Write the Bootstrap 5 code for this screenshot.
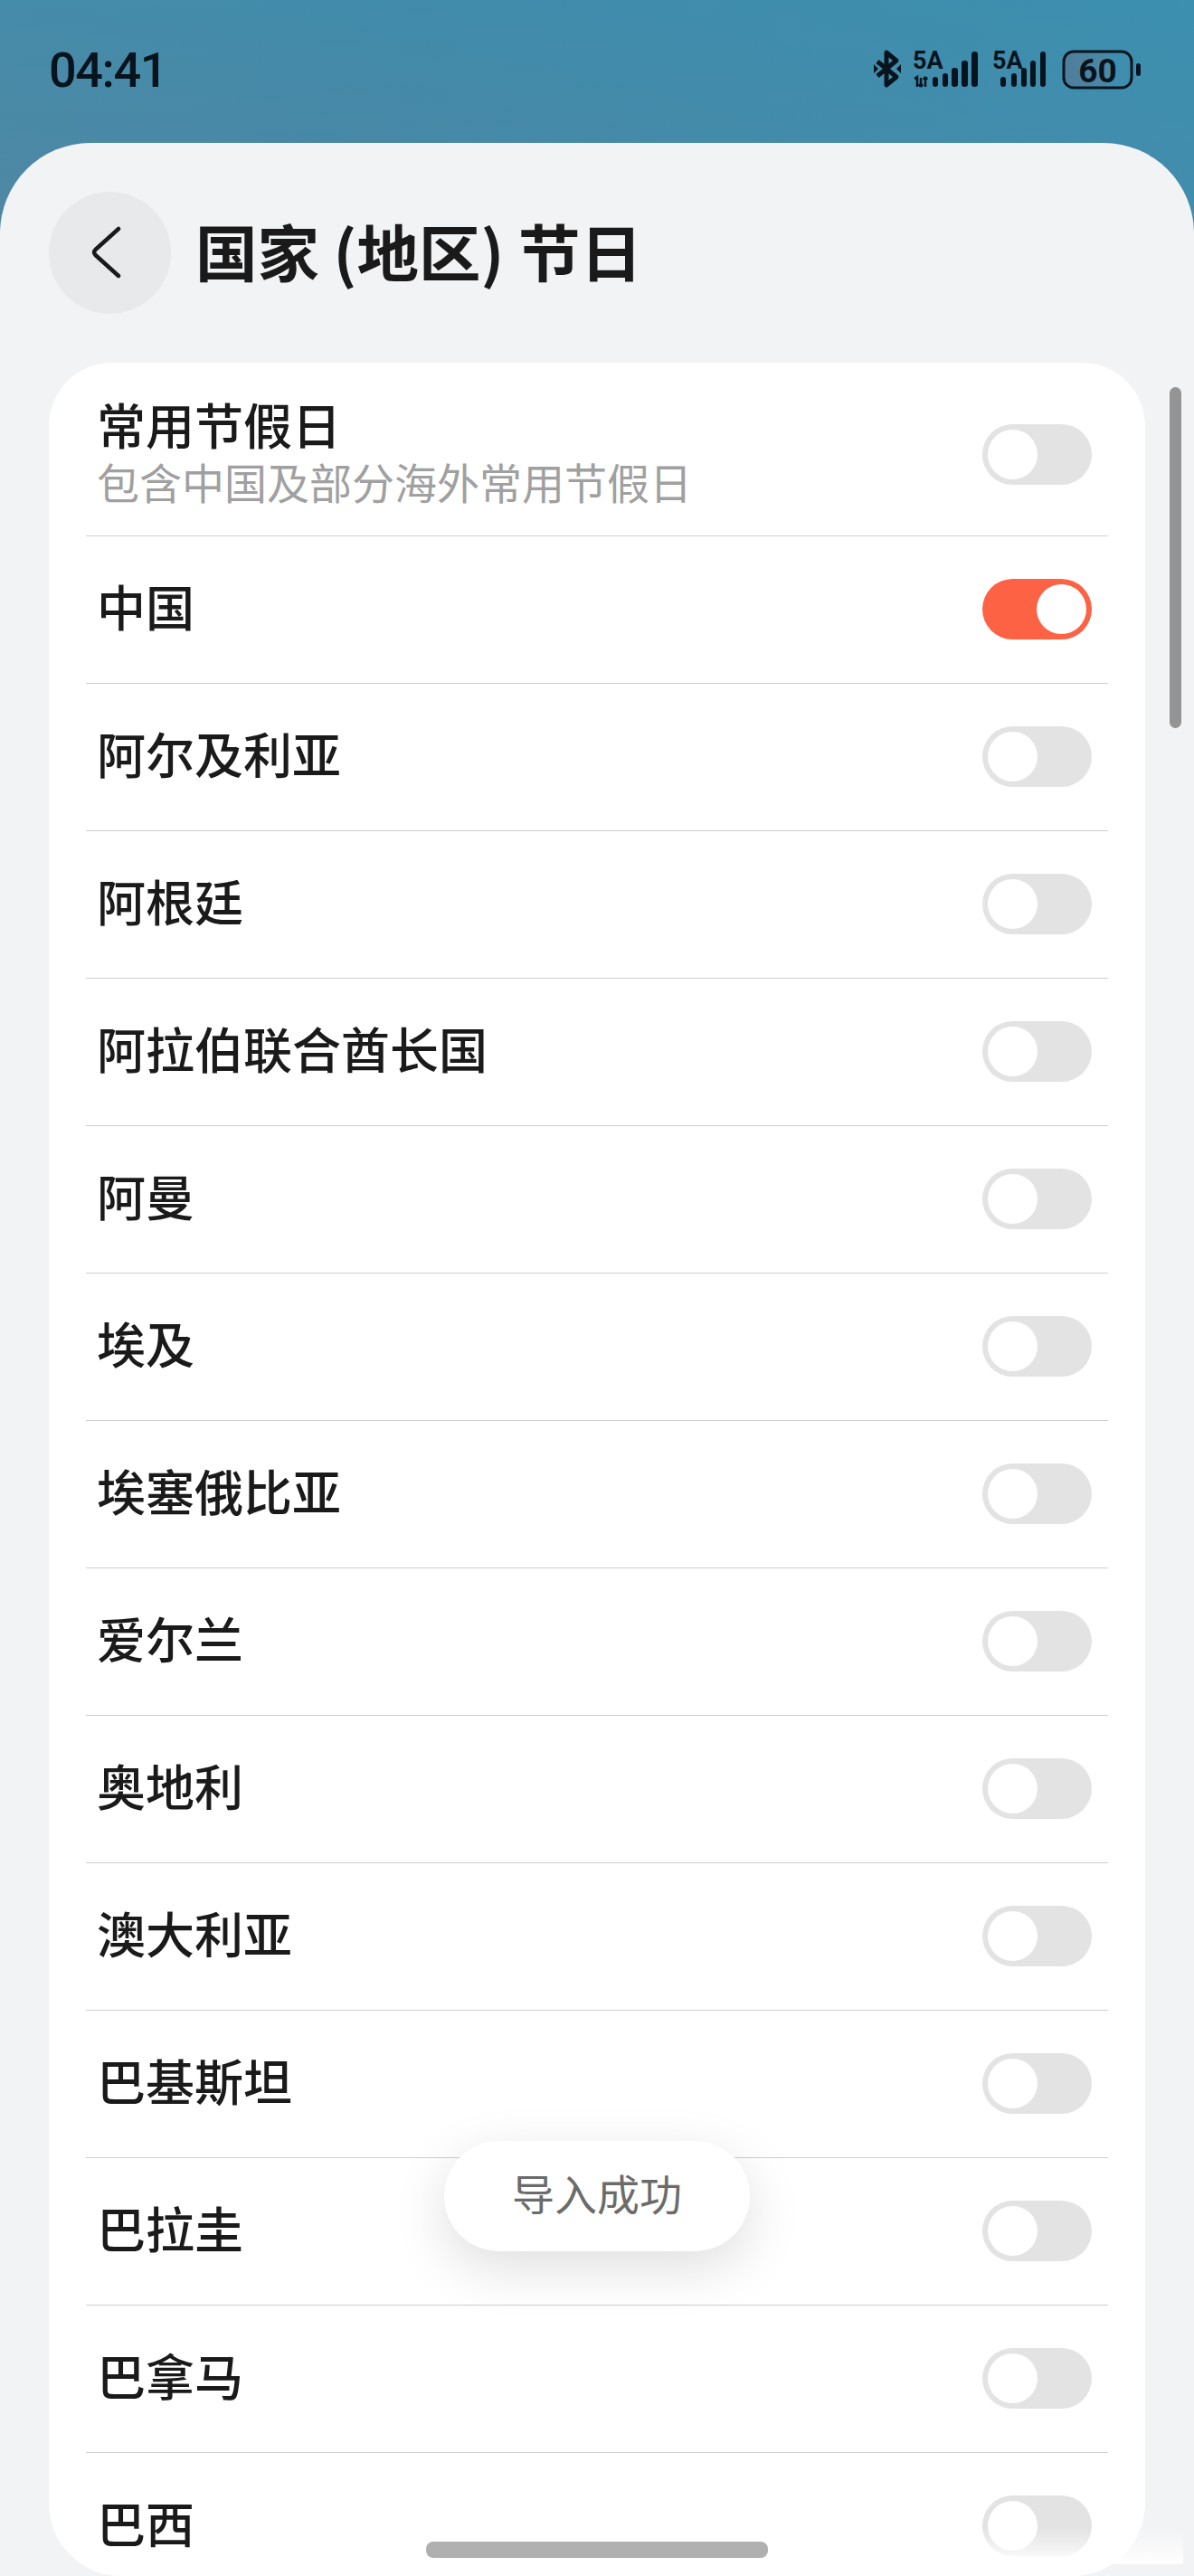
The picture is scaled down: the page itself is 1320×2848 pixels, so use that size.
<!DOCTYPE html>
<html lang="zh-CN">
<head>
    <meta charset="UTF-8">
    <title>国家 (地区) 节日</title>
    <link rel="stylesheet" href="https://cdn.jsdelivr.net/npm/bootstrap@5.3.0/dist/css/bootstrap.min.css">
    <style>
        html, body { margin: 0; height: 2848px; }
        body {
            width: 1320px;
            overflow: hidden;
            background: #f2f3f5;
            font-family: "Noto Sans CJK SC", "Noto Sans", sans-serif;
            color: #1a1a1a;
        }
        .screen {
            position: relative;
            width: 1320px;
            height: 2848px;
            overflow: hidden;
            background:
                linear-gradient(to bottom, rgba(58, 144, 176, .45), rgba(92, 130, 156, .25)) top / 100% 300px no-repeat,
                linear-gradient(100deg, #4e88a4 0%, #4787a6 35%, #3d8fb0 100%) top / 100% 300px no-repeat;
        }
        .status-row { height: 158px; padding: 50px 59px 0 54px; }
        .clock { font-family: Roboto, sans-serif; font-size: 54px; line-height: 56px; letter-spacing: -1.4px; color: #07141d; font-weight: 500; }
        .status-icons { gap: 13px; padding-top: 0; }
        .panel-sheet { height: 2690px; background: #f2f3f5; border-radius: 100px 100px 0 0; padding: 54px 54px 0; }
        .back-btn { width: 135px; height: 135px; background: #e8e9eb; border: 0; border-radius: 50%; padding: 0; }
        .page-title { font-size: 68.500px; font-weight: 700; line-height: 1; margin: -5px 0 0 27px; color: #1a1a1a; }
        .holiday-card { height: 2447px; margin-top: 54px; background: #fff; border: 0; border-radius: 70px 70px 80px 80px; overflow: hidden; padding: 0 41px; }
        .holiday-card .holiday-row {
            height: 163px;
            background: transparent;
            color: #1a1a1a;
            font-size: 54px;
            font-weight: 500;
            line-height: 1.2;
            padding: 0 18px 0 12px;
            border-width: 1px 0 0;
            border-style: solid;
            border-color: #cfcfd1;
            border-radius: 0;
        }
        .holiday-card .holiday-row.first-row { height: 191px; border-top: 0; }
        .holiday-row > span:first-child { margin-top: -7px; }
        .row-text { margin-top: 6px; }
        .holiday-row > .toggle-pill { margin-top: -2px; }
        .first-row > .toggle-pill { margin-top: 12px; }
        .row-note { font-size: 47px; font-weight: 400; color: #a0a0a0; line-height: 60px; margin-top: 1px; }
        .toggle-pill { width: 121px; height: 67px; border-radius: 34px; background: #e3e3e3; padding: 6px; flex: none; }
        .toggle-pill i { display: block; width: 55px; height: 55px; border-radius: 50%; background: #fff; }
        .toggle-pill.on { background: #fd6244; }
        .toggle-pill.on i { margin-left: auto; }
        .scroll-thumb { position: absolute; left: 1293px; top: 428px; width: 13px; height: 377px; background: #949494; border-radius: 7px; }
        .toast-pill {
            position: absolute;
            left: 491px;
            top: 2367px;
            width: 338px;
            height: 122px;
            padding-bottom: 8px;
            border-radius: 61px;
            background: #fff;
            color: #6b6b6b;
            font-size: 47px;
            box-shadow: 0 18px 60px rgba(0, 0, 0, .13);
        }
        .home-bar { position: absolute; left: 471px; top: 2810px; width: 378px; height: 18px; border-radius: 8px; background: #b0b0b0; }
        .bottom-fade {
            position: absolute;
            left: 1062px;
            top: 2795px;
            width: 246px;
            height: 40px;
            background: linear-gradient(to bottom, rgba(255, 255, 255, 0), rgba(255, 255, 255, .97));
        }
    </style>
</head>
<body>
<div class="screen">
    <div class="status-row d-flex justify-content-between align-items-start">
        <div class="clock">04:41</div>
        <div class="status-icons d-flex align-items-start">
            <svg width="30" height="50" viewBox="0 -4 30 50">
                <path d="M4 14 L25 31 L14 40 V4 L25 13 L4 30" fill="none" stroke="#07141d" stroke-width="5" stroke-linejoin="round"/>
                <path d="M0 17 L5 22 L0 27 Z M30 17 L25 22 L30 27 Z" fill="#07141d"/>
            </svg>
            <svg width="75" height="50" viewBox="0 -4 75 50">
                <text x="0" y="22" font-family="Roboto, sans-serif" font-size="27" font-weight="700" fill="#07141d">5A</text>
                <path d="M2 33 L5 31 V42 M9 32 V42 M9 42 L7 39 M9 42 L11 39 M14 42 V31 M14 31 L12 34 M14 31 L16 34" fill="none" stroke="#07141d" stroke-width="2.500"/>
                <rect x="22" y="31" width="6" height="11" rx="3" fill="#07141d"/>
                <rect x="33" y="27" width="6" height="15" rx="3" fill="#07141d"/>
                <rect x="43" y="21" width="7" height="21" rx="3" fill="#07141d"/>
                <rect x="54" y="13" width="7" height="29" rx="3" fill="#07141d"/>
                <rect x="65" y="3" width="7" height="39" rx="3" fill="#07141d"/>
            </svg>
            <svg width="60" height="50" viewBox="0 -4 60 50">
                <text x="0" y="22" font-family="Roboto, sans-serif" font-size="27" font-weight="700" fill="#07141d">5A</text>
                <rect x="9" y="31" width="6" height="11" rx="3" fill="#07141d"/>
                <rect x="21" y="27" width="6" height="15" rx="3" fill="#07141d"/>
                <rect x="32" y="21" width="6" height="21" rx="3" fill="#07141d"/>
                <rect x="42" y="13" width="6" height="29" rx="3" fill="#07141d"/>
                <rect x="53" y="3" width="6" height="39" rx="3" fill="#07141d"/>
            </svg>
            <svg width="87" height="50" viewBox="0 -4 87 50" class="ms-1">
                <defs>
                    <linearGradient id="batteryFill" x1="0" x2="1" y1="0" y2="0">
                        <stop offset="0" stop-color="#4f7d9a"/>
                        <stop offset="1" stop-color="#4a89a6"/>
                    </linearGradient>
                </defs>
                <rect x="2" y="3" width="75" height="40" rx="11" fill="none" stroke="#07141d" stroke-width="3"/>
                <rect x="4" y="5" width="50" height="36" rx="9" fill="url(#batteryFill)"/>
                <text x="39.5" y="37" text-anchor="middle" font-family="Roboto, sans-serif" font-size="37" font-weight="700" fill="#07141d">60</text>
                <rect x="82" y="16" width="5" height="14" rx="2.5" fill="#07141d"/>
            </svg>
        </div>
    </div>

    <div class="panel-sheet">
        <div class="d-flex align-items-center">
            <button type="button" class="back-btn d-flex align-items-center justify-content-center">
                <svg width="135" height="135" viewBox="0 0 135 135">
                    <path d="M77 41 L51.500 64 Q48.500 67 51.500 70 L77 93" fill="none" stroke="#1a1a1a" stroke-width="4.500" stroke-linecap="round" stroke-linejoin="round"/>
                </svg>
            </button>
            <h1 class="page-title">国家 (地区) 节日</h1>
        </div>

        <div class="holiday-card card">
            <div class="list-group list-group-flush">
                <div class="holiday-row first-row list-group-item d-flex justify-content-between align-items-center">
                    <div class="row-text">
                        <div>常用节假日</div>
                        <div class="row-note">包含中国及部分海外常用节假日</div>
                    </div>
                    <span class="toggle-pill"><i></i></span>
                </div>
                <div class="holiday-row list-group-item d-flex justify-content-between align-items-center"><span>中国</span><span class="toggle-pill on"><i></i></span></div>
                <div class="holiday-row list-group-item d-flex justify-content-between align-items-center"><span>阿尔及利亚</span><span class="toggle-pill"><i></i></span></div>
                <div class="holiday-row list-group-item d-flex justify-content-between align-items-center"><span>阿根廷</span><span class="toggle-pill"><i></i></span></div>
                <div class="holiday-row list-group-item d-flex justify-content-between align-items-center"><span>阿拉伯联合酋长国</span><span class="toggle-pill"><i></i></span></div>
                <div class="holiday-row list-group-item d-flex justify-content-between align-items-center"><span>阿曼</span><span class="toggle-pill"><i></i></span></div>
                <div class="holiday-row list-group-item d-flex justify-content-between align-items-center"><span>埃及</span><span class="toggle-pill"><i></i></span></div>
                <div class="holiday-row list-group-item d-flex justify-content-between align-items-center"><span>埃塞俄比亚</span><span class="toggle-pill"><i></i></span></div>
                <div class="holiday-row list-group-item d-flex justify-content-between align-items-center"><span>爱尔兰</span><span class="toggle-pill"><i></i></span></div>
                <div class="holiday-row list-group-item d-flex justify-content-between align-items-center"><span>奥地利</span><span class="toggle-pill"><i></i></span></div>
                <div class="holiday-row list-group-item d-flex justify-content-between align-items-center"><span>澳大利亚</span><span class="toggle-pill"><i></i></span></div>
                <div class="holiday-row list-group-item d-flex justify-content-between align-items-center"><span>巴基斯坦</span><span class="toggle-pill"><i></i></span></div>
                <div class="holiday-row list-group-item d-flex justify-content-between align-items-center"><span>巴拉圭</span><span class="toggle-pill"><i></i></span></div>
                <div class="holiday-row list-group-item d-flex justify-content-between align-items-center"><span>巴拿马</span><span class="toggle-pill"><i></i></span></div>
                <div class="holiday-row list-group-item d-flex justify-content-between align-items-center"><span>巴西</span><span class="toggle-pill"><i></i></span></div>
            </div>
        </div>
    </div>

    <div class="scroll-thumb"></div>
    <div class="toast-pill d-flex align-items-center justify-content-center">导入成功</div>
    <div class="bottom-fade"></div>
    <div class="home-bar"></div>
</div>
<script src="https://cdn.jsdelivr.net/npm/bootstrap@5.3.0/dist/js/bootstrap.bundle.min.js"></script>
</body>
</html>
